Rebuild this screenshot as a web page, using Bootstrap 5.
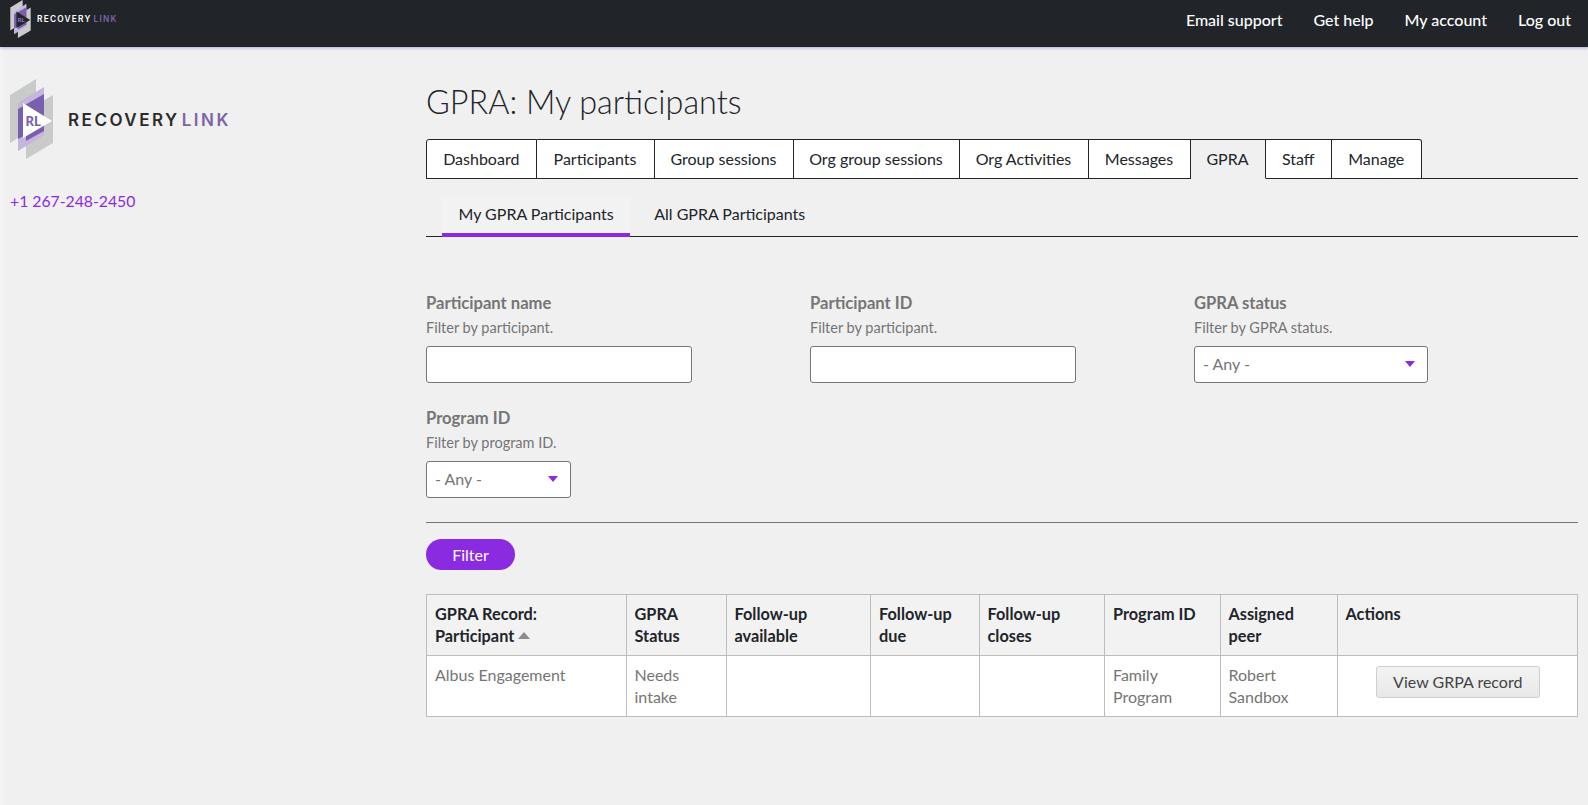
<!DOCTYPE html>
<html lang="en">
<head>
<meta charset="utf-8">
<title>GPRA: My participants</title>
<link href="https://cdn.jsdelivr.net/npm/bootstrap@5.3.0/dist/css/bootstrap.min.css" rel="stylesheet">
<style>
html,body{height:100%}
body{background:#f0f0f0;font-family:Lato,"Liberation Sans",sans-serif;font-size:16px;line-height:22px;color:#212529;overflow:hidden;box-shadow:inset 8px 0 8px -8px rgba(255,255,255,.6)}
a{text-decoration:none}
.topbar{height:47px;background:#212529;box-shadow:0 1px 3px #b9a6d6;padding:0 17px 0 10px;align-items:flex-start}
.topword{font-family:Inter,Lato,sans-serif;font-weight:600;font-size:8.3px;letter-spacing:1.22px;color:#fff;line-height:1;margin:15px 0 0 6px;white-space:nowrap}
.topword em,.bigword em{font-style:normal;color:#7d63a8;margin-left:2px}
.toplinks{gap:31px;padding-top:8px}
.toplinks a{color:#fff;font-weight:500;font-size:16px;line-height:24px}
.sidecol{width:426px;flex:none;padding:32px 0 0 10px}
.bigbrand{height:80px}
.bigword{font-family:Inter,Lato,sans-serif;font-weight:600;font-size:17px;letter-spacing:2.5px;color:#2b2b2b;margin:3px 0 0 15px;white-space:nowrap;line-height:1}
.phone{color:#8a2be2;display:block;margin-top:31px;font-size:15.75px}
.maincol{width:1152px;flex:none;padding-top:36px}
.pagetitle{font-size:32.4px;font-weight:300;line-height:38px;margin:0 0 18px}
.maintabs{border-bottom:1px solid #212529;flex-wrap:nowrap;margin-bottom:0}
.maintabs .nav-link{background:#fff;color:#212529;border:1px solid #212529;border-left:0;border-radius:0;margin:0;padding:7px 0 9px;height:40px;line-height:23px;white-space:nowrap;margin-bottom:-1px;text-align:center}
.maintabs .nav-item:first-child .nav-link{border-left:1px solid #212529;border-top-left-radius:3px}
.maintabs .nav-item:last-child .nav-link{border-top-right-radius:3px}
.maintabs .nav-item:nth-child(1){width:110.5px}
.maintabs .nav-item:nth-child(2){width:118px}
.maintabs .nav-item:nth-child(3){width:139px}
.maintabs .nav-item:nth-child(4){width:166px}
.maintabs .nav-item:nth-child(5){width:129px}
.maintabs .nav-item:nth-child(6){width:102px}
.maintabs .nav-item:nth-child(7){width:75px}
.maintabs .nav-item:nth-child(8){width:66.5px}
.maintabs .nav-item:nth-child(9){width:89.5px}
.maintabs .nav-link.active{background:#f0f0f0;color:#212529;border-bottom-color:#f0f0f0}
.subtabs{border-bottom:1px solid #212529;padding-left:16px;height:41px;margin-top:17px}
.subtabs .nav-link{color:#212529;padding:6px 16px 0;height:41px;line-height:24px;margin-bottom:-1px;border-bottom:3px solid transparent;box-sizing:border-box;margin-right:8px}
.subtabs .nav-link.active{background:#f2f2f2;border-bottom:4px solid #8a2be2;padding:6px 16.5px 0;border-radius:0}
.filterrow{margin-top:54px}
.fieldname{color:#757575;font-weight:700;font-size:16.6px;line-height:24px;margin:0}
.fieldhint{color:#757575;font-size:14.5px;line-height:20px;margin:3px 0 8px}
.txtbox{width:266px;height:37px;border:1px solid #757575;border-radius:3px;background:#fff}
.pick{height:37px;border:1px solid #757575;border-radius:3px;background:#fff;padding:0 8px;color:#757575;line-height:35px}
.pick span{padding-bottom:2px;line-height:22px}
.pick i{width:0;height:0;border-left:5px solid transparent;border-right:5px solid transparent;border-top:6px solid #8a2be2;margin-top:-2px;margin-right:4px}
.pickwide{width:234px}
.picknarrow{width:145px}
.secondrow{margin-top:23px}
.sep{border:0;border-top:1px solid #757575;opacity:1;margin:24px 0 16px}
.gobtn{background:#8a2be2;border:0;color:#fff;border-radius:16px;width:89px;height:31px;padding:0;font-size:16px;line-height:31px;font-weight:400;display:block}
.gridtable{table-layout:fixed;width:1152px;margin:24px 0 0;border-collapse:collapse;--bs-table-bg:transparent}
.gridtable th,.gridtable td{border:1px solid #bdbdbd;padding:8px;line-height:22px;vertical-align:top;font-size:16px}
.gridtable thead th{background:#f2f2f2;font-weight:700;color:#212529;font-size:16.3px}
.gridtable tbody td{background:#fff;color:#757575;height:60px}
.gridtable th:nth-child(1){width:199.5px}
.gridtable th:nth-child(2){width:100px}
.gridtable th:nth-child(3){width:144.5px}
.gridtable th:nth-child(4){width:108.5px}
.gridtable th:nth-child(5){width:125.5px}
.gridtable th:nth-child(6){width:115.5px}
.gridtable th:nth-child(7){width:117px}
.sortup{display:inline-block;width:0;height:0;border-left:6px solid transparent;border-right:6px solid transparent;border-bottom:7px solid #8c8c8c;vertical-align:3px;margin-left:0}
.gridtable td.actcell{text-align:center;padding:10px 0 0 1px}
.viewbtn{width:164px;height:32px;padding:0;background:linear-gradient(#f3f3f3,#e8e8e8);border:1px solid #cfcfcf;border-radius:3px;color:#444;font-size:16px;line-height:30px}
</style>
</head>
<body>
<header class="topbar d-flex justify-content-between">
  <a href="#" class="d-flex align-items-start">
    <svg viewBox="0 0 43 80" width="21" height="38" aria-hidden="true">
      <polygon points="0,16 26,0 26,48 0,64" fill="#c9cbcb"/>
      <polygon points="16,32 43,16 43,64 16,80" fill="#c9cbcb"/>
      <polygon points="8,24 34,8 34,56 8,72" fill="#c4b6dc"/>
      <polygon points="8,30 34,15 34,52 16,62 16,56 8,60" fill="#7a5fae"/>
      <polygon points="13,24 42,42 13,59" fill="#22262b"/>
      <text x="15" y="47" font-size="13" font-weight="900" fill="#8f75bb" font-family="Lato,sans-serif">RL</text>
    </svg>
    <span class="topword">RECOVERY<em>LINK</em></span>
  </a>
  <nav class="toplinks d-flex">
    <a href="#">Email support</a>
    <a href="#">Get help</a>
    <a href="#">My account</a>
    <a href="#">Log out</a>
  </nav>
</header>
<div class="d-flex">
  <aside class="sidecol">
    <a href="#" class="bigbrand d-flex align-items-center">
      <svg viewBox="0 0 43 80" width="43" height="80" aria-hidden="true">
        <polygon points="0,16 26,0 26,48 0,64" fill="#c9cbcb"/>
        <polygon points="16,32 43,16 43,64 16,80" fill="#c9cbcb"/>
        <polygon points="8,24 34,8 34,56 8,72" fill="#c4b6dc"/>
        <polygon points="8,30 34,15 34,52 16,62 16,56 8,60" fill="#7a5fae"/>
        <polygon points="13,24 42,42 13,59" fill="#fff"/>
        <text x="15.5" y="47" font-size="13" font-weight="900" fill="#7a5fae" font-family="Lato,sans-serif">RL</text>
      </svg>
      <span class="bigword">RECOVERY<em>LINK</em></span>
    </a>
    <a href="#" class="phone">+1 267-248-2450</a>
  </aside>
  <main class="maincol">
    <h1 class="pagetitle">GPRA: My participants</h1>
    <ul class="nav maintabs">
      <li class="nav-item"><a class="nav-link" href="#">Dashboard</a></li>
      <li class="nav-item"><a class="nav-link" href="#">Participants</a></li>
      <li class="nav-item"><a class="nav-link" href="#">Group sessions</a></li>
      <li class="nav-item"><a class="nav-link" href="#">Org group sessions</a></li>
      <li class="nav-item"><a class="nav-link" href="#">Org Activities</a></li>
      <li class="nav-item"><a class="nav-link" href="#">Messages</a></li>
      <li class="nav-item"><a class="nav-link active" href="#">GPRA</a></li>
      <li class="nav-item"><a class="nav-link" href="#">Staff</a></li>
      <li class="nav-item"><a class="nav-link" href="#">Manage</a></li>
    </ul>
    <ul class="nav subtabs">
      <li class="nav-item"><a class="nav-link active" href="#">My GPRA Participants</a></li>
      <li class="nav-item"><a class="nav-link" href="#">All GPRA Participants</a></li>
    </ul>
    <form>
      <div class="row g-0 filterrow">
        <div class="col-4">
          <div class="fieldname">Participant name</div>
          <div class="fieldhint">Filter by participant.</div>
          <div class="txtbox"></div>
        </div>
        <div class="col-4">
          <div class="fieldname">Participant ID</div>
          <div class="fieldhint">Filter by participant.</div>
          <div class="txtbox"></div>
        </div>
        <div class="col-4">
          <div class="fieldname">GPRA status</div>
          <div class="fieldhint">Filter by GPRA status.</div>
          <div class="pick pickwide d-flex justify-content-between align-items-center"><span>- Any -</span><i></i></div>
        </div>
      </div>
      <div class="row g-0 secondrow">
        <div class="col-4">
          <div class="fieldname">Program ID</div>
          <div class="fieldhint">Filter by program ID.</div>
          <div class="pick picknarrow d-flex justify-content-between align-items-center"><span>- Any -</span><i></i></div>
        </div>
      </div>
      <hr class="sep">
      <button type="button" class="btn gobtn">Filter</button>
    </form>
    <table class="table gridtable">
      <thead>
        <tr>
          <th>GPRA Record:<br>Participant <span class="sortup"></span></th>
          <th>GPRA Status</th>
          <th>Follow-up available</th>
          <th>Follow-up due</th>
          <th>Follow-up closes</th>
          <th>Program ID</th>
          <th>Assigned peer</th>
          <th>Actions</th>
        </tr>
      </thead>
      <tbody>
        <tr>
          <td>Albus Engagement</td>
          <td>Needs intake</td>
          <td></td>
          <td></td>
          <td></td>
          <td>Family Program</td>
          <td>Robert Sandbox</td>
          <td class="actcell"><button type="button" class="btn viewbtn">View GRPA record</button></td>
        </tr>
      </tbody>
    </table>
  </main>
</div>
<script src="https://cdn.jsdelivr.net/npm/bootstrap@5.3.0/dist/js/bootstrap.bundle.min.js"></script>
</body>
</html>
